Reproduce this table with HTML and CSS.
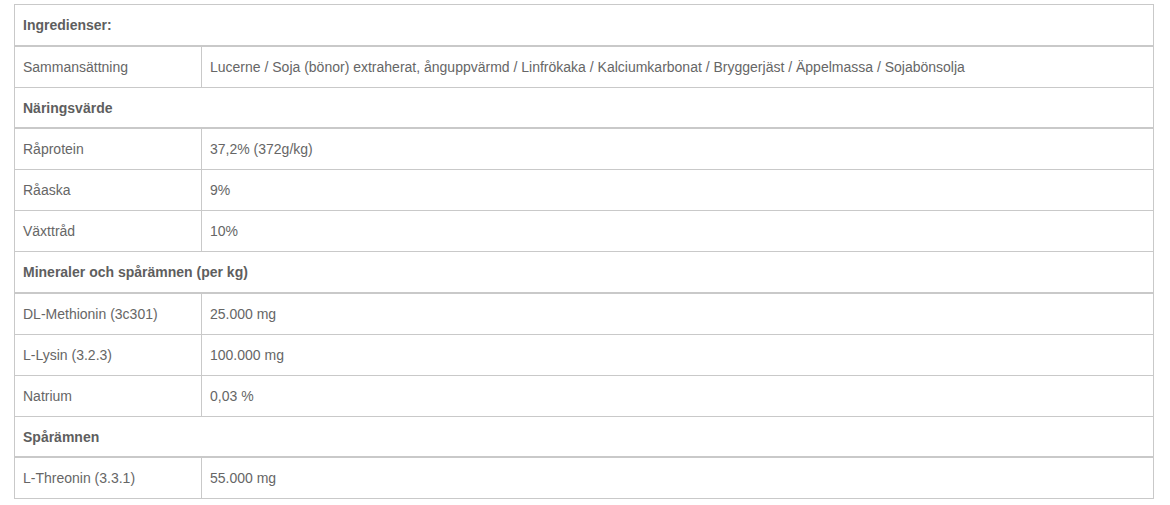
FILE: index.html
```html
<!DOCTYPE html>
<html lang="sv">
<head>
<meta charset="utf-8">
<title>Ingredienser</title>
<link rel="stylesheet" href="styles.css">
</head>
<body>
<div class="wrap">
<table class="spec">
  <tbody>
    <tr class="head"><th colspan="2">Ingredienser:</th></tr>
    <tr><td class="label">Sammansättning</td><td>Lucerne / Soja (bönor) extraherat, ånguppvärmd / Linfrökaka / Kalciumkarbonat / Bryggerjäst / Äppelmassa / Sojabönsolja</td></tr>
    <tr class="head"><th colspan="2">Näringsvärde</th></tr>
    <tr><td class="label">Råprotein</td><td>37,2% (372g/kg)</td></tr>
    <tr><td class="label">Råaska</td><td>9%</td></tr>
    <tr><td class="label">Växttråd</td><td>10%</td></tr>
    <tr class="head"><th colspan="2">Mineraler och spårämnen (per kg)</th></tr>
    <tr><td class="label">DL-Methionin (3c301)</td><td>25.000 mg</td></tr>
    <tr><td class="label">L-Lysin (3.2.3)</td><td>100.000 mg</td></tr>
    <tr><td class="label">Natrium</td><td>0,03 %</td></tr>
    <tr class="head"><th colspan="2">Spårämnen</th></tr>
    <tr><td class="label">L-Threonin (3.3.1)</td><td>55.000 mg</td></tr>
  </tbody>
</table>
</div>
</body>
</html>
```
FILE: styles.css
```css
html, body {
  margin: 0;
  padding: 0;
  background: #fff;
}
.wrap {
  padding: 4px 0 0 14px;
}
.spec {
  width: 1140px;
  border-collapse: collapse;
  font-family: "Liberation Sans", Arial, sans-serif;
  font-size: 14px;
  line-height: 20px;
  color: #666;
}
.spec th,
.spec td {
  border: 1px solid #c9c9c9;
  padding: 10px 8px;
  text-align: left;
  vertical-align: middle;
}
.spec th {
  font-weight: bold;
  color: #5e5e5e;
  padding-bottom: 9.5px;
}
.spec .head th {
  border-bottom-width: 2px;
}
.spec .label {
  width: 170px;
}
```
